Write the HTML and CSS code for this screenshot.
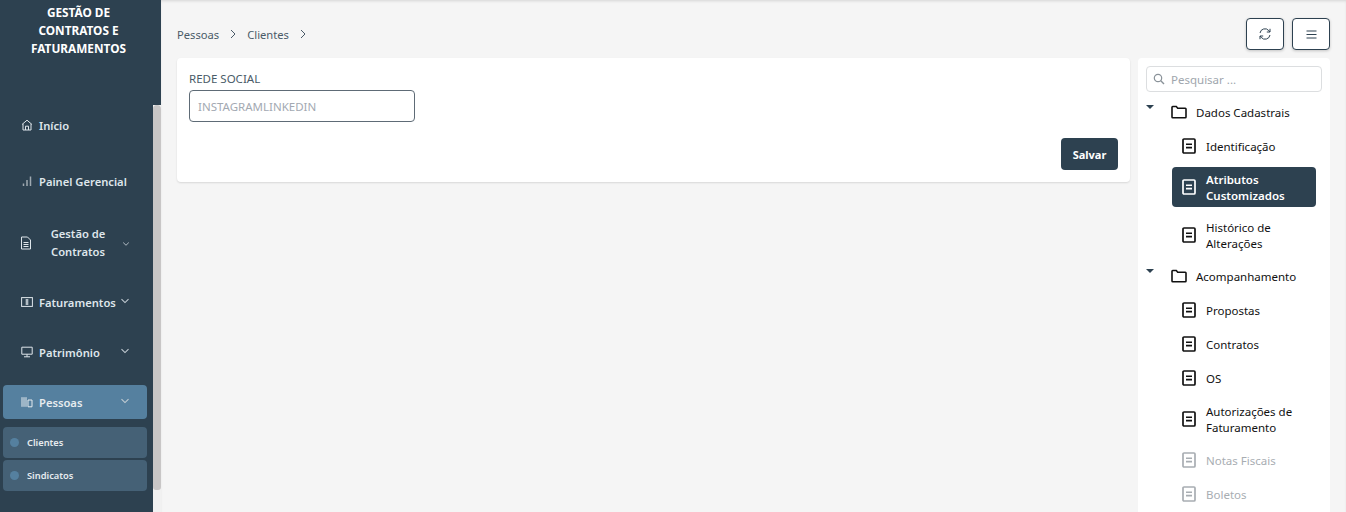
FILE: index.html
```html
<!DOCTYPE html>
<html lang="pt-BR">
<head>
<meta charset="utf-8">
<title>Clientes</title>
<link rel="stylesheet" href="styles.css">
</head>
<body>
<svg class="defs" width="0" height="0" aria-hidden="true">
  <symbol id="doc" viewBox="0 0 14 16"><rect x="1" y="1" width="12" height="14" rx="1" fill="none" stroke="currentColor" stroke-width="1.700"/><path d="M4 6.200h6M4 9.600h6" stroke="currentColor" stroke-width="1.600"/></symbol>
  <symbol id="folder" viewBox="0 0 16 14"><path d="M1 12V2.200c0-.4.300-.7.700-.7h3.600l1.400 1.700h7.600c.4 0 .7.300.7.700V12c0 .4-.3.700-.7.700H1.700c-.4 0-.7-.3-.7-.7z" fill="none" stroke="currentColor" stroke-width="1.600"/></symbol>
  <symbol id="chev" viewBox="0 0 10 6"><path d="M1.500 1.200 5 4.600l3.500-3.400" fill="none" stroke="currentColor" stroke-width="1.100"/></symbol>
</svg>
<div class="app">
  <aside class="sidebar">
    <h1 class="brand">GESTÃO DE<br>CONTRATOS E<br>FATURAMENTOS</h1>
    <div class="scroller">
      <nav class="nav">
        <a class="item item-inicio"><svg class="ico" viewBox="0 0 12 12"><path d="M1 5.500 6 1.200l5 4.300M2 5v6h8V5M4.500 11V7.200h3V11" fill="none" stroke="currentColor"/></svg><span>Início</span></a>
        <a class="item item-painel"><svg class="ico" viewBox="0 0 12 12"><path d="M2.500 11V8.500M6 11V5M9.500 11V1.500" fill="none" stroke="#9fa9b0" stroke-width="1.500"/></svg><span>Painel Gerencial</span></a>
        <a class="item item-gestao"><svg class="ico ico-doc" viewBox="0 0 12 14"><path d="M1.500 1h6l3 3v9h-9zM3.500 6.500h5M3.500 8.500h5M3.500 10.500h5" fill="none" stroke="currentColor"/></svg><span class="two">Gestão de<br>Contratos</span><svg class="chev chev-g"><use href="#chev"/></svg></a>
        <a class="item item-fat"><svg class="ico" viewBox="0 0 12 12"><rect x=".6" y="1.600" width="10.800" height="8.800" fill="none" stroke="currentColor"/><path d="M4.500 4h3M4.500 6h3M4.500 8h3M6 3v6" stroke="currentColor"/></svg><span>Faturamentos</span><svg class="chev"><use href="#chev"/></svg></a>
        <a class="item"><svg class="ico" viewBox="0 0 12 12"><path d="M.8 1.200h10.400v7H.8zM6 8.200v2.500M3 10.800h6" fill="none" stroke="currentColor"/></svg><span>Patrimônio</span><svg class="chev"><use href="#chev"/></svg></a>
        <a class="item active"><svg class="ico" viewBox="0 0 12 12"><path d="M1 1.200v9.600M3 1.200v9.600M5 1.200v9.600M7 4h4v6.800H7z" fill="none" stroke="currentColor"/></svg><span>Pessoas</span><svg class="chev"><use href="#chev"/></svg></a>
        <a class="sub sub-first"><i class="dot"></i>Clientes</a>
        <a class="sub"><i class="dot"></i>Sindicatos</a>
      </nav>
      <div class="track"><div class="thumb"></div></div>
    </div>
  </aside>
  <main class="main">
    <header class="topbar">
      <div class="crumbs">
        <span>Pessoas</span>
        <svg class="sep" viewBox="0 0 6 10"><path d="M1 1l4 4-4 4" fill="none" stroke="currentColor"/></svg>
        <span>Clientes</span>
        <svg class="sep" viewBox="0 0 6 10"><path d="M1 1l4 4-4 4" fill="none" stroke="currentColor"/></svg>
      </div>
      <div class="actions">
        <button class="tool"><svg viewBox="0 0 14 14" width="14" height="14"><path d="M2 6a5 5 0 0 1 8.800-2.400L12 5M12 1.800V5H8.800M12 8a5 5 0 0 1-8.800 2.400L2 9M2 12.200V9h3.200" fill="none" stroke="currentColor" stroke-width="1"/></svg></button>
        <button class="tool"><svg viewBox="0 0 11 9" width="11" height="9"><path d="M.5 1h10M.5 4.500h10M.5 8h10" stroke="currentColor" stroke-width="1"/></svg></button>
      </div>
    </header>
    <div class="content">
      <section class="card">
        <label class="label" for="rede">REDE SOCIAL</label>
        <input class="field" id="rede" placeholder="INSTAGRAMLINKEDIN">
        <div class="card-foot"><button class="save">Salvar</button></div>
      </section>
      <aside class="tree">
        <div class="search"><svg viewBox="0 0 12 12" width="12" height="12"><circle cx="5" cy="5" r="3.700" fill="none" stroke="currentColor" stroke-width="1.200"/><path d="M7.800 7.800 11 11" stroke="currentColor" stroke-width="1.400"/></svg><span>Pesquisar ...</span></div>
        <div class="group"><i class="caret"></i><svg class="folder"><use href="#folder"/></svg><span>Dados Cadastrais</span></div>
        <div class="leaf"><svg class="doc"><use href="#doc"/></svg><span>Identificação</span></div>
        <div class="leaf tall selected"><svg class="doc"><use href="#doc"/></svg><span>Atributos<br>Customizados</span></div>
        <div class="leaf tall"><svg class="doc"><use href="#doc"/></svg><span>Histórico de<br>Alterações</span></div>
        <div class="group"><i class="caret"></i><svg class="folder"><use href="#folder"/></svg><span>Acompanhamento</span></div>
        <div class="leaf"><svg class="doc"><use href="#doc"/></svg><span>Propostas</span></div>
        <div class="leaf"><svg class="doc"><use href="#doc"/></svg><span>Contratos</span></div>
        <div class="leaf"><svg class="doc"><use href="#doc"/></svg><span>OS</span></div>
        <div class="leaf tall"><svg class="doc"><use href="#doc"/></svg><span>Autorizações de<br>Faturamento</span></div>
        <div class="leaf off"><svg class="doc"><use href="#doc"/></svg><span>Notas Fiscais</span></div>
        <div class="leaf off"><svg class="doc"><use href="#doc"/></svg><span>Boletos</span></div>
      </aside>
    </div>
  </main>
</div>
</body>
</html>
```

FILE: styles.css
```css
* { box-sizing: border-box; }
html, body { margin: 0; height: 100%; overflow: hidden; }
body { font-family: "Noto Sans", sans-serif; font-size: 11.500px; color: #2d4150; background: #f5f5f5; }
.defs { position: absolute; }
.app { display: flex; height: 512px; }

.sidebar { display: flex; flex-direction: column; width: 161px; flex: none; color: #e6ebef; }
.brand { margin: 0; flex: none; height: 105px; padding: 3px 8px 0 4px; background: #2d4150; font-size: 11.800px; line-height: 18px; font-weight: 700; color: #fff; text-align: center; }
.scroller { display: flex; flex: 1; min-height: 0; }
.track { width: 8px; flex: none; background: #f1f1f1; }
.thumb { height: 385px; background: #c8c6c6; border-radius: 4px 4px 3px 3px; }

.nav { display: flex; flex-direction: column; width: 153px; flex: none; background: #2d4150; padding: 3px 6px 0 3px; }
.item { display: flex; align-items: center; height: 34px; padding-left: 18px; font-size: 11.200px; font-weight: 600; color: #dfe6eb; border-radius: 4px; margin-top: 16px; position: relative; }
.item-inicio { margin-top: 0; }
.item-painel { margin-top: 22px; }
.item-gestao { height: 54px; margin-top: 18px; }
.item-fat { margin-top: 15px; }
.item .ico { width: 12px; height: 12px; flex: none; margin-right: 6px; }
.item .ico-doc { height: 14px; margin-left: -1px; }
.item .two { width: 80px; text-align: center; line-height: 18px; }
.chev { position: absolute; left: 117px; top: 13px; width: 10px; height: 6px; color: #c3ccd3; }
.chev-g { top: 25px; left: 119px; width: 8px; }
.active { background: #55809f; color: #e6ebef; }
.sub { display: flex; align-items: center; height: 31px; padding-left: 7px; font-size: 9.300px; font-weight: 600; background: #456176; color: #e6ebef; border-radius: 4px; margin-top: 2px; }
.sub-first { margin-top: 8px; }
.dot { width: 9px; height: 9px; border-radius: 50%; background: #55809f; margin-right: 8px; flex: none; }

.main { flex: 1; min-width: 0; box-shadow: inset 0 2px 3px -1px #d4d4d4; padding: 0 16px; }
.topbar { display: flex; align-items: flex-start; justify-content: space-between; height: 58px; padding-top: 18px; }
.crumbs { display: flex; align-items: center; gap: 11px; height: 33px; color: #4a5b68; font-size: 11.200px; }
.sep { width: 6px; height: 10px; margin-bottom: 2px; }
.actions { display: flex; gap: 8px; }
.tool { width: 38px; height: 32px; padding: 0; background: #fff; border: 1px solid #2d4150; border-radius: 4px; color: #2d4150; display: flex; align-items: center; justify-content: center; box-shadow: 0 1px 3px rgba(0,0,0,.2); }

.content { display: flex; align-items: flex-start; gap: 8px; }
.card { flex: 1; min-width: 0; height: 124px; background: #fff; border-radius: 4px; padding: 12px 12px 0; box-shadow: 0 1px 2px rgba(0,0,0,.12); }
.label { display: block; height: 20px; line-height: 17px; color: #4a5b68; }
.field { display: block; width: 226px; height: 32px; padding: 0 8px; border: 1px solid #5e6b76; border-radius: 4px; font: 11.500px "Noto Sans", sans-serif; background: #fff; outline: none; }
.field::placeholder { color: #a3a9b2; opacity: 1; }
.card-foot { display: flex; justify-content: flex-end; margin-top: 16px; }
.save { width: 57px; height: 32px; border: 0; border-radius: 4px; background: #2d4150; color: #fff; font: 700 11px "Noto Sans", sans-serif; padding: 0; }

.tree { display: flex; flex-direction: column; width: 192px; flex: none; height: 454px; background: #fff; border-radius: 4px 4px 0 0; padding: 8px 8px 0; color: #111; }
.search { display: flex; align-items: center; gap: 6px; height: 26px; padding-left: 6px; border: 1px solid #dcdee0; border-radius: 4px; color: #8a9299; margin-bottom: 3px; flex: none; }
.search span { color: #a0a6ad; }
.group { display: flex; align-items: center; height: 34px; position: relative; padding-left: 25px; flex: none; }
.caret { position: absolute; left: 0; top: 10px; width: 0; height: 0; border: 4px solid transparent; border-top: 4px solid #2d4150; border-bottom: 0; }
.folder { width: 16px; height: 14px; margin-right: 9px; flex: none; color: #111; }
.leaf { display: flex; align-items: center; flex: none; height: 34px; margin-left: 26px; margin-right: 6px; padding-left: 10px; border-radius: 4px; line-height: 16px; }
.leaf span { padding-top: 2px; }
.doc { width: 14px; height: 16px; margin-right: 10px; flex: none; }
.tall { height: 40px; margin-top: 4px; margin-bottom: 4px; }
.selected { background: #2d4150; color: #fff; font-weight: 600; }
.off { color: #a8adb2; }
```
